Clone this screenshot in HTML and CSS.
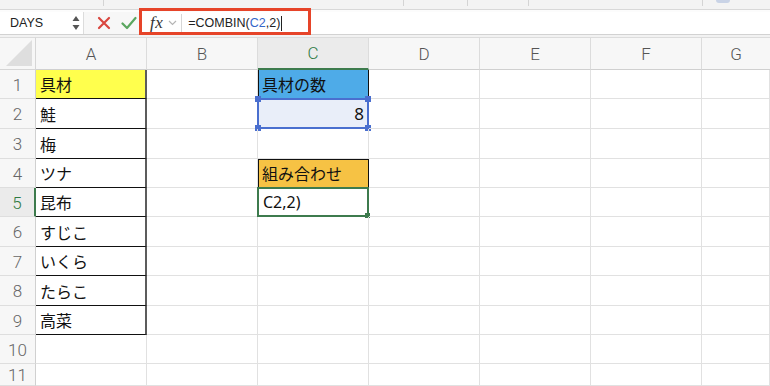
FILE: index.html
```html
<!DOCTYPE html>
<html lang="ja">
<head>
<meta charset="utf-8">
<link rel="stylesheet" href="styles.css">
</head>
<body>
<div class="app">
  <div class="top">
    <span class="tsep s1"></span>
    <span class="tsep s2"></span>
    <span class="tsep s3"></span>
    <span class="tsep s4"></span>
    <span class="tsep s5"></span>
    <span class="tsep s6"></span>
  </div>
  <div class="fbar">
    <div class="namebox">
      <span class="nbtext">DAYS</span>
      <span class="spin">
        <svg width="8" height="16" viewBox="0 0 8 16"><path d="M4 1 L7.5 6 H0.5 Z M4 15 L7.5 10 H0.5 Z" fill="#555"/></svg>
      </span>
    </div>
    <div class="btns">
      <svg class="ic" width="14" height="14" viewBox="0 0 14 14"><path d="M2 2 L12 12 M12 2 L2 12" stroke="#d9473f" stroke-width="2.2" stroke-linecap="round"/></svg>
      <svg class="ic" width="16" height="14" viewBox="0 0 16 14"><path d="M1.5 7.5 L6 12 L14.5 2" stroke="#5aa65f" stroke-width="2.2" fill="none" stroke-linecap="round" stroke-linejoin="round"/></svg>
    </div>
    <div class="formula">
      <span class="fx">fx</span>
      <svg class="chev" width="9" height="6" viewBox="0 0 9 6"><path d="M1 1 L4.5 4.5 L8 1" stroke="#b5b5b5" stroke-width="1.2" fill="none"/></svg>
      <span class="fsep"></span>
      <span class="ftext">=COMBIN(<span class="ref">C2</span>,2)<span class="caret"></span></span>
    </div>
    <div class="redbox"></div>
  </div>
  <div class="gap"></div>
  <div class="sheet">
    <div class="corner"><span class="tri"></span></div>
    <div class="ch">A</div>
    <div class="ch">B</div>
    <div class="ch act">C</div>
    <div class="ch">D</div>
    <div class="ch">E</div>
    <div class="ch">F</div>
    <div class="ch last">G</div>

    <div class="rh">1</div><div class="c ca yel">具材</div><div class="c"></div><div class="c bx blue">具材の数</div><div class="c"></div><div class="c"></div><div class="c"></div><div class="c"></div>
    <div class="rh">2</div><div class="c ca">鮭</div><div class="c"></div><div class="c num sel">8<span class="h h1"></span><span class="h h2"></span><span class="h h3"></span><span class="h h4"></span></div><div class="c"></div><div class="c"></div><div class="c"></div><div class="c"></div>
    <div class="rh">3</div><div class="c ca">梅</div><div class="c"></div><div class="c"></div><div class="c"></div><div class="c"></div><div class="c"></div><div class="c"></div>
    <div class="rh">4</div><div class="c ca">ツナ</div><div class="c"></div><div class="c bx orange">組み合わせ</div><div class="c"></div><div class="c"></div><div class="c"></div><div class="c"></div>
    <div class="rh ract">5</div><div class="c ca">昆布</div><div class="c"></div><div class="c active">C2,2)<span class="h h4 g"></span></div><div class="c"></div><div class="c"></div><div class="c"></div><div class="c"></div>
    <div class="rh">6</div><div class="c ca">すじこ</div><div class="c"></div><div class="c"></div><div class="c"></div><div class="c"></div><div class="c"></div><div class="c"></div>
    <div class="rh">7</div><div class="c ca">いくら</div><div class="c"></div><div class="c"></div><div class="c"></div><div class="c"></div><div class="c"></div><div class="c"></div>
    <div class="rh">8</div><div class="c ca">たらこ</div><div class="c"></div><div class="c"></div><div class="c"></div><div class="c"></div><div class="c"></div><div class="c"></div>
    <div class="rh">9</div><div class="c ca">高菜</div><div class="c"></div><div class="c"></div><div class="c"></div><div class="c"></div><div class="c"></div><div class="c"></div>
    <div class="rh">10</div><div class="c"></div><div class="c"></div><div class="c"></div><div class="c"></div><div class="c"></div><div class="c"></div><div class="c"></div>
    <div class="rh">11</div><div class="c"></div><div class="c"></div><div class="c"></div><div class="c"></div><div class="c"></div><div class="c"></div><div class="c"></div>
  </div>
</div>
</body>
</html>
```
FILE: styles.css
```css
* { box-sizing: border-box; }
html, body { margin: 0; padding: 0; background: #fff; }
body { font-family: "Noto Sans CJK JP", "Noto Sans", sans-serif; }
.app { width: 770px; height: 386px; overflow: hidden; position: relative; }

.top { height: 10px; background: #f3f3f3; border-bottom: 1px solid #d8d8d8; position: relative; }
.tsep { position: absolute; top: 0; width: 1px; height: 6px; background: #d4d4d4; }
.s1 { left: 103px; } .s2 { left: 403px; } .s3 { left: 467px; } .s4 { left: 528px; } .s5 { left: 702px; }
.s6 { left: 716px; width: 14px; height: 3px; top: 0; background: #c9d3e6; border-radius: 0 0 3px 3px; }

.fbar { height: 25px; display: flex; align-items: stretch; background: #f7f7f7; border-top: 2px solid #fcfcfc; border-bottom: 1px solid #d2d2d2; position: relative; }
.namebox { width: 84px; background: #fff; border-right: 1px solid #dcdcdc; display: flex; align-items: center; justify-content: space-between; padding: 0 3px 0 10px; }
.nbtext { font-family: "Liberation Sans", Arial, sans-serif; font-size: 12.5px; color: #222; }
.spin { display: flex; align-items: center; }
.btns { width: 56px; display: flex; align-items: center; justify-content: space-between; padding: 0 3px 0 13px; }
.formula { flex: 1; background: #fff; display: flex; align-items: center; padding-left: 9px; border-left: 1px solid #e0e0e0; }
.fx { font-family: "Liberation Serif", "Times New Roman", serif; font-style: italic; font-size: 17px; color: #333; letter-spacing: 0.5px; }
.chev { margin-left: 5px; }
.fsep { width: 1px; height: 18px; background: #d6d6d6; margin: 0 6px 0 4px; }
.ftext { font-family: "Liberation Sans", Arial, sans-serif; font-size: 12.5px; color: #222; display: flex; align-items: center; }
.ref { color: #3567c9; }
.caret { display: inline-block; width: 1px; height: 15px; background: #222; margin-left: 1px; }
.redbox { position: absolute; left: 139px; top: -4px; width: 172px; height: 27px; border: 3px solid #e64429; }

.gap { height: 2px; background: #f2f2f2; }

.sheet { display: grid; grid-template-columns: 36px repeat(6, 111px) 1fr; grid-template-rows: 33px 29px 30px 30px 29px 29px 30px 29px 30px 29px 29px 22px; }
.corner { background: #f7f7f7; border-right: 1px solid #d6d6d6; border-bottom: 1px solid #d6d6d6; border-top: 1px solid #dcdcdc; position: relative; }
.tri { position: absolute; right: 3px; bottom: 3px; width: 0; height: 0; border-left: 26px solid transparent; border-bottom: 26px solid #dedede; }
.ch { background: #f7f7f7; border-right: 1px solid #dcdcdc; border-bottom: 1px solid #d0d0d0; border-top: 1px solid #dcdcdc; display: flex; align-items: center; justify-content: center; font-family: Roboto, "Liberation Sans", sans-serif; font-weight: 300; font-size: 17px; color: #555; }
.ch.last { border-right: none; }
.ch.act { background: #ebebeb; color: #2f7a43; border-bottom: 2px solid #3d7b4d; }
.rh { background: #f7f7f7; border-right: 1px solid #d0d0d0; border-bottom: 1px solid #dedede; display: flex; align-items: center; justify-content: center; font-family: Roboto, "Liberation Sans", sans-serif; font-weight: 300; font-size: 17px; color: #666; padding-top: 1px; }
.rh.ract { background: #ebebeb; color: #2f7a43; border-right: 2px solid #3d7b4d; }

.c { border-right: 1px solid #e1e1e1; border-bottom: 1px solid #e1e1e1; display: flex; align-items: center; padding: 0 4px; font-size: 16px; color: #111; position: relative; white-space: nowrap; }
.ca { border-bottom: 1px solid #111; border-right: 2px solid #5c5c5c; }
.yel { background: #ffff4d; }
.bx { border-right: 1px solid #111; border-bottom: 1px solid #111; box-shadow: inset 1px 0 0 #111; }
.orange { background: #f6c244; box-shadow: inset 1px 0 0 #111, inset 0 1px 0 #111; }
.blue { background: #4eabe8; }
.num { justify-content: flex-end; font-family: "Noto Sans", sans-serif; font-size: 17px; }
.sel { background: #e9eef9; border: 2px solid #4a6fcf; margin-left: -1px; margin-top: -1px; padding-right: 3px; }
.h { position: absolute; width: 6px; height: 6px; background: #4a6fcf; }
.h1 { left: -4px; top: -4px; } .h2 { right: -4px; top: -4px; } .h3 { left: -4px; bottom: -4px; } .h4 { right: -4px; bottom: -4px; }
.h.g { background: #3d7b4d; width: 5px; height: 5px; right: -3px; bottom: -3px; }
.active { border: 2px solid #3d7b4d; margin-left: -1px; margin-top: -1px; font-family: "Noto Sans", sans-serif; font-size: 16px; padding-left: 4px; }
```
